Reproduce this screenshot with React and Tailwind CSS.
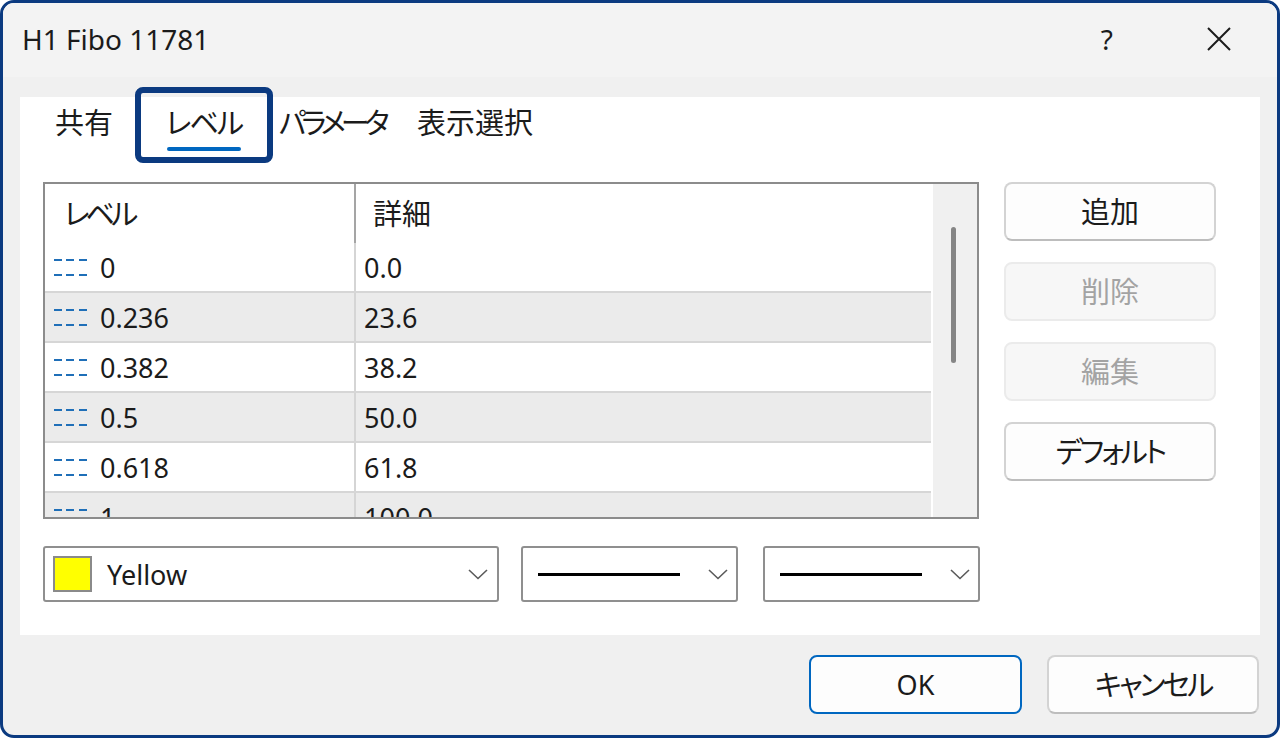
import React from "react";

const rows = [
  { level: "0", desc: "0.0" },
  { level: "0.236", desc: "23.6" },
  { level: "0.382", desc: "38.2" },
  { level: "0.5", desc: "50.0" },
  { level: "0.618", desc: "61.8" },
  { level: "1", desc: "100.0" },
];

const DashIcon = () => (
  <svg width="34" height="17" viewBox="0 0 34 17" className="shrink-0">
    {[0, 12, 25].map((x) => (
      <g key={x} fill="#1f6fb8">
        <rect x={x} y="0" width="8" height="2" />
        <rect x={x} y="15" width="8" height="2" />
      </g>
    ))}
  </svg>
);

const Chevron = () => (
  <svg width="20" height="11" viewBox="0 0 20 11" className="shrink-0">
    <polyline points="1,1 10,9.5 19,1" fill="none" stroke="#5a5a5a" strokeWidth="1.6" />
  </svg>
);

const SideButton = ({ children, disabled, tight }) => (
  <button
    type="button"
    className={
      (disabled
        ? "h-[59px] w-full rounded-[8px] border-2 border-[#ebebeb] bg-[#f7f7f7] text-[29px] text-[#a3a3a3]"
        : "h-[59px] w-full rounded-[8px] border-2 border-[#d3d3d3] border-b-[#bdbdbd] bg-[#fdfdfd] text-[29px] text-[#1b1b1b]") +
      (tight ? " tracking-[-3px]" : "")
    }
  >
    {children}
  </button>
);

export default function App() {
  return (
    <div className="w-[1280px] h-[738px] bg-white font-['Noto_Sans','Noto_Sans_CJK_JP',sans-serif] [font-feature-settings:'palt'] text-[#1b1b1b]">
      <div className="w-full h-full border-[3px] border-[#0b3a80] rounded-[14px] overflow-hidden flex flex-col bg-[#f0f0f0]">
        {/* title bar */}
        <div className="h-[74px] shrink-0 bg-[#f3f3f3] flex items-center pl-[19px] pb-[2px]">
          <span className="text-[28px] leading-none">H1 Fibo 11781</span>
          <div className="flex-1" />
          <span className="text-[28px] leading-none mr-[94px]">?</span>
          <svg width="24" height="24" viewBox="0 0 24 24" className="mr-[46px]">
            <path d="M1 1 L23 23 M23 1 L1 23" stroke="#1b1b1b" strokeWidth="2" />
          </svg>
        </div>

        {/* content */}
        <div className="px-[17px] pt-[20px]">
          <div className="bg-white h-[538px] flex flex-col">
            {/* tabs */}
            <div className="h-[50px] flex items-center pl-[35px] text-[29px] leading-none">
              <div className="w-[80px]">共有</div>
              <div className="relative w-[138px] h-[50px] flex items-center justify-center">
                <span className="tracking-[-2px]">レベル</span>
                <div className="absolute -top-[10px] left-0 w-[138px] h-[76px] border-[6px] border-[#0b3a80] rounded-[8px]" />
                <div className="absolute top-[50px] left-[32px] w-[74px] h-[4px] bg-[#0067c0] rounded-full" />
              </div>
              <div className="ml-[6px] w-[138px] tracking-[-5px]">パラメータ</div>
              <div>表示選択</div>
            </div>

            {/* table + buttons */}
            <div className="mt-[35px] ml-[23px] flex">
              <div className="w-[936px] h-[337px] border-2 border-[#8c8c8c] flex overflow-hidden">
                <div className="w-[888px] flex flex-col">
                  <div className="h-[59px] shrink-0 flex text-[29px] leading-none">
                    <div className="w-[309px] pl-[19px] flex items-center tracking-[-4px]">レベル</div>
                    <div className="w-[2px] bg-[#a5a5a5]" />
                    <div className="pl-[17px] flex items-center">詳細</div>
                  </div>
                  {rows.map((r, i) => (
                    <div
                      key={r.level}
                      className={
                        "h-[50px] shrink-0 w-[886px] flex border-b-2 border-[#d6d6d6] text-[27px] leading-none " +
                        (i % 2 === 1 ? "bg-[#ebebeb]" : "bg-white")
                      }
                    >
                      <div className="w-[309px] pl-[9px] flex items-center gap-[12px]">
                        <DashIcon />
                        <span>{r.level}</span>
                      </div>
                      <div className="w-[2px] bg-[#d5d5d5]" />
                      <div className="pl-[8px] flex items-center">{r.desc}</div>
                    </div>
                  ))}
                </div>
                <div className="w-[44px] bg-[#f0f0f0] pt-[43px] pl-[18px]">
                  <div className="w-[5px] h-[136px] bg-[#858585] rounded-full" />
                </div>
              </div>

              <div className="ml-[25px] w-[212px] flex flex-col gap-[21px]">
                <SideButton>追加</SideButton>
                <SideButton disabled>削除</SideButton>
                <SideButton disabled>編集</SideButton>
                <SideButton tight>デフォルト</SideButton>
              </div>
            </div>

            {/* dropdowns */}
            <div className="mt-[27px] ml-[23px] flex">
              <div className="w-[456px] h-[56px] border-2 border-[#8f8f8f] rounded-[3px] flex items-center pl-[8px] pr-[9px]">
                <div className="w-[39px] h-[36px] border-2 border-[#8a8a8a] bg-[#ffff00]" />
                <span className="ml-[15px] text-[27px] leading-none">Yellow</span>
                <div className="flex-1" />
                <Chevron />
              </div>
              <div className="ml-[22px] w-[217px] h-[56px] border-2 border-[#8f8f8f] rounded-[3px] flex items-center pl-[15px] pr-[8px]">
                <div className="w-[142px] h-[3px] bg-black" />
                <div className="flex-1" />
                <Chevron />
              </div>
              <div className="ml-[25px] w-[217px] h-[56px] border-2 border-[#8f8f8f] rounded-[3px] flex items-center pl-[15px] pr-[8px]">
                <div className="w-[142px] h-[3px] bg-black" />
                <div className="flex-1" />
                <Chevron />
              </div>
            </div>
          </div>
        </div>

        {/* bottom buttons */}
        <div className="flex justify-end gap-[25px] pt-[20px] pr-[18px]">
          <button
            type="button"
            className="w-[213px] h-[59px] rounded-[8px] border-2 border-[#0067c0] bg-[#fdfdfd] text-[27px] leading-none"
          >
            OK
          </button>
          <button
            type="button"
            className="w-[212px] h-[59px] rounded-[8px] border-2 border-[#d3d3d3] border-b-[#bdbdbd] bg-[#fdfdfd] text-[29px] leading-none tracking-[-3px]"
          >
            キャンセル
          </button>
        </div>
      </div>
    </div>
  );
}
